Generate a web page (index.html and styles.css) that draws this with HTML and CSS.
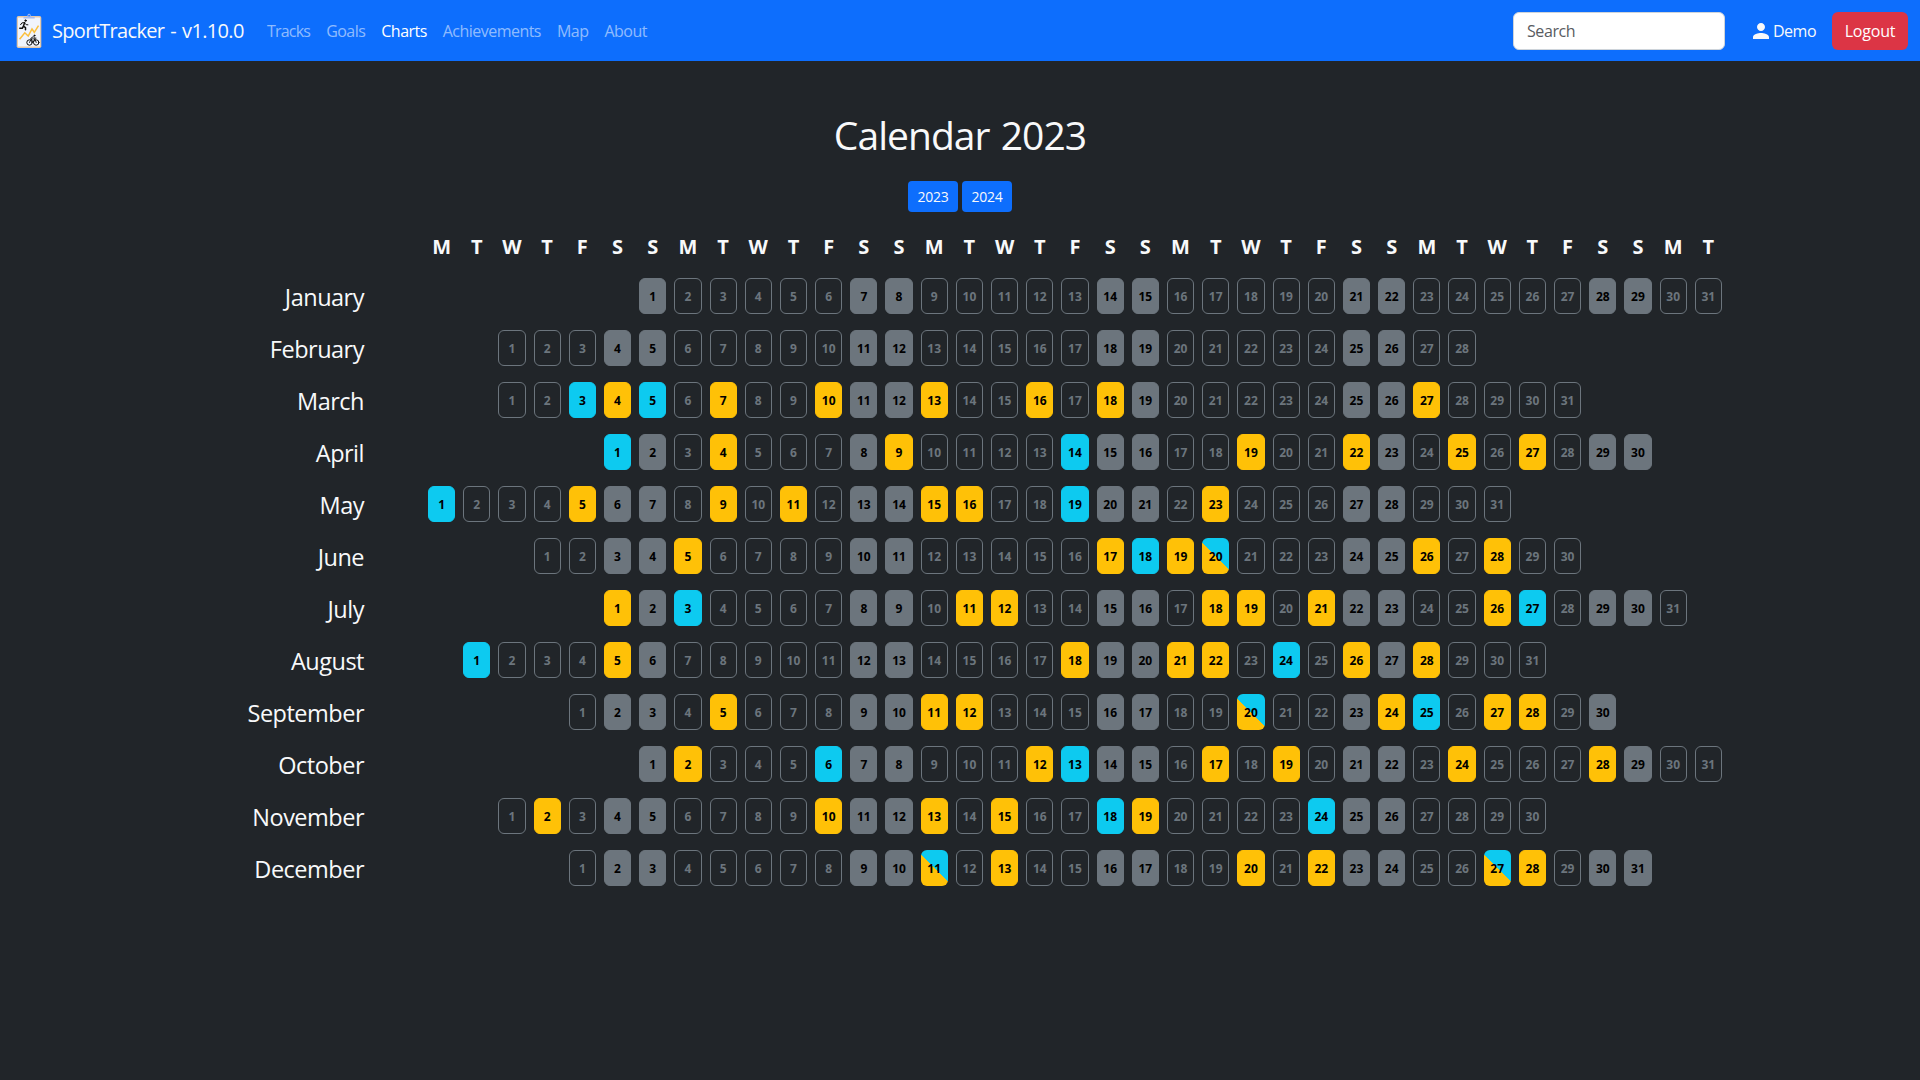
FILE: index.html
```html
<!DOCTYPE html>
<html lang="en">
<head>
<meta charset="utf-8">
<title>SportTracker</title>
<link rel="stylesheet" href="styles.css">
</head>
<body>
<nav class="navbar">
  <a class="brand">
    <svg class="brand-logo" viewBox="0 0 26 36" width="26" height="36">
      <rect x=".7" y="3" width="24.6" height="32" rx="1.8" fill="#e4c9aa"/>
      <rect x="2" y="4.4" width="22" height="29.2" rx=".6" fill="#f1f4fc"/>
      <path d="M7.500 5.600V4h3.600c.4-1.200.3-3.200 2-3.200s1.600 2 2 3.200h3.600v1.600z" fill="#a9bcec"/>
      <circle cx="13.100" cy="2.600" r=".8" fill="#0d6efd"/>
      <path d="M3.600 26.300l5.200-6.500 3.400 3.200 3.800-7 2.300 3.300 4.200-6.600" fill="none" stroke="#fbbf3c" stroke-width="1.500"/>
      <g fill="none" stroke="#111" stroke-linecap="round" stroke-linejoin="round">
        <circle cx="9.600" cy="7.600" r=".9" fill="#111" stroke-width=".6"/>
        <path d="M8.600 9.800l-1.200 3.400 2.100 1.400v2.200M7.400 13.200l-1.100 2.100H3.800" stroke-width="1.500"/>
        <path d="M8.500 9.600l-2.600.3-1.300 1.800M9 10.400l1.200 1.300 1.700.1" stroke-width="1"/>
        <circle cx="13.500" cy="29.500" r="2.700" stroke-width="1"/>
        <circle cx="20.200" cy="29.500" r="2.700" stroke-width="1"/>
        <path d="M13.500 29.500l1.700-3.600h3.700l1.300 3.600M15.200 26l1.900 3.300 1.800-3.400M14.800 25.300l2.600-1.700 1.200 1.500h1.400" stroke-width=".9"/>
        <circle cx="18.500" cy="22.600" r=".8" fill="#111" stroke-width=".3"/>
      </g>
    </svg>
    <span class="brand-name">SportTracker - v1.10.0</span>
  </a>
  <div class="nav-links">
    <a class="nav-link">Tracks</a>
    <a class="nav-link">Goals</a>
    <a class="nav-link active">Charts</a>
    <a class="nav-link">Achievements</a>
    <a class="nav-link">Map</a>
    <a class="nav-link">About</a>
  </div>
  <input class="search" type="search" placeholder="Search">
  <a class="user">
    <svg class="user-icon" viewBox="0 0 24 24" width="24" height="24" fill="currentColor"><path d="M12 12c2.210 0 4-1.790 4-4s-1.790-4-4-4-4 1.790-4 4 1.790 4 4 4zm0 2c-2.670 0-8 1.340-8 4v2h16v-2c0-2.660-5.330-4-8-4z"/></svg>
    <span>Demo</span>
  </a>
  <button class="logout">Logout</button>
</nav>
<main class="page">
  <h1 class="title">Calendar 2023</h1>
  <div class="years">
    <a class="year">2023</a>
    <a class="year">2024</a>
  </div>
  <section class="calendar" id="calendar"></section>
</main>
<script src="calendar.js"></script>
</body>
</html>
```
FILE: calendar.js
```js
// b = blue activity, y = yellow activity, m = both on the same day
const months = [
  { name: 'January', start: 6, days: 31 },
  { name: 'February', start: 2, days: 28 },
  { name: 'March', start: 2, days: 31, b: [3, 5], y: [4, 7, 10, 13, 16, 18, 27] },
  { name: 'April', start: 5, days: 30, b: [1, 14], y: [4, 9, 19, 22, 25, 27] },
  { name: 'May', start: 0, days: 31, b: [1, 19], y: [5, 9, 11, 15, 16, 23] },
  { name: 'June', start: 3, days: 30, b: [18], y: [5, 17, 19, 26, 28], m: [20] },
  { name: 'July', start: 5, days: 31, b: [3, 27], y: [1, 11, 12, 18, 19, 21, 26] },
  { name: 'August', start: 1, days: 31, b: [1, 24], y: [5, 18, 21, 22, 26, 28] },
  { name: 'September', start: 4, days: 30, b: [25], y: [5, 11, 12, 24, 27, 28], m: [20] },
  { name: 'October', start: 6, days: 31, b: [6, 13], y: [2, 12, 17, 19, 24, 28] },
  { name: 'November', start: 2, days: 30, b: [18, 24], y: [2, 10, 13, 15, 19] },
  { name: 'December', start: 4, days: 31, y: [13, 20, 22, 28], m: [11, 27] }
];

const calendar = document.getElementById('calendar');

function add(className, text) {
  const el = document.createElement('div');
  el.className = className;
  el.textContent = text;
  calendar.append(el);
}

add('corner', '');
for (let i = 0; i < 37; i++) add('weekday', 'MTWTFSS'[i % 7]);

for (const month of months) {
  add('month', month.name);
  for (let i = 0; i < 37; i++) {
    const day = i - month.start + 1;
    if (day < 1 || day > month.days) {
      add('blank', '');
      continue;
    }
    let kind = i % 7 > 4 ? ' weekend' : '';
    if (month.b?.includes(day)) kind = ' blue';
    if (month.y?.includes(day)) kind = ' yellow';
    if (month.m?.includes(day)) kind = ' mixed';
    add('day' + kind, day);
  }
}
```
FILE: styles.css
```css
* { box-sizing: border-box; }
body {
  margin: 0;
  background: #212529;
  color: #f8f9fa;
  font: 16px/24px "Open Sans", "Noto Sans", sans-serif;
}
.navbar {
  display: flex;
  align-items: center;
  height: 61px;
  padding: 0 12px 0 16px;
  background: #0d6efd;
}
.brand { display: flex; align-items: center; width: 243px; gap: 10px; }
.brand-name { font-size: 20px; line-height: 30px; white-space: nowrap; letter-spacing: -.67px; word-spacing: 1.5px; }
.nav-links { display: flex; flex: 1; padding-top: 1px; }
.nav-link { padding: 0 8px; color: rgba(255, 255, 255, .55); letter-spacing: -.53px; }
.nav-link:first-child { letter-spacing: -.8px; }
.nav-link.active { color: #fff; }
.search {
  width: 212px; height: 38px; padding: 0 13px; margin-right: 24px;
  border: 1px solid #ced4da; border-radius: 6px; background: #fff;
  font: inherit; letter-spacing: -.4px;
}
.search::placeholder { color: #595c5f; opacity: 1; }
.user { display: flex; align-items: center; width: 83px; letter-spacing: -.5px; }
.logout {
  width: 76px; height: 38px; padding: 0; border: 0; border-radius: 6px;
  background: #dc3545; color: #fff; font: inherit; letter-spacing: -.2px;
}
.page { padding-top: 50px; }
.title {
  margin: 0; text-align: center; font-weight: 400; font-size: 39px; line-height: 48px;
  letter-spacing: -.95px; word-spacing: 2px;
}
.years { display: flex; justify-content: center; gap: 4px; margin-top: 22px; }
.year {
  width: 50px; height: 31px; line-height: 31px; border-radius: 4px;
  background: #0d6efd; font-size: 14px; text-align: center; letter-spacing: -.2px;
}
.calendar {
  display: grid;
  grid-template-columns: 187px repeat(37, 27.2px);
  grid-template-rows: 30px repeat(12, 36px);
  column-gap: 8px; row-gap: 16px;
  margin: 20px 0 0 233px;
}
.weekday { font-weight: 700; font-size: 20px; line-height: 30px; text-align: center; }
.month { padding-right: 56px; font-size: 23.5px; line-height: 38px; text-align: right; letter-spacing: -.5px; }
.day {
  border: 1px solid #6c757d; border-radius: 6px; color: #6c757d;
  font-weight: 700; font-size: 12px; line-height: 36px; text-align: center;
}
.weekend { background: #6c757d; color: #000; }
.blue { background: #0dcaf0; border-color: #0dcaf0; color: #000; }
.yellow { background: #ffc107; border-color: #ffc107; color: #000; }
.mixed { border: 0; line-height: 38px; background: linear-gradient(45deg, #ffc107 50%, #0dcaf0 50%); color: #000; }
```
